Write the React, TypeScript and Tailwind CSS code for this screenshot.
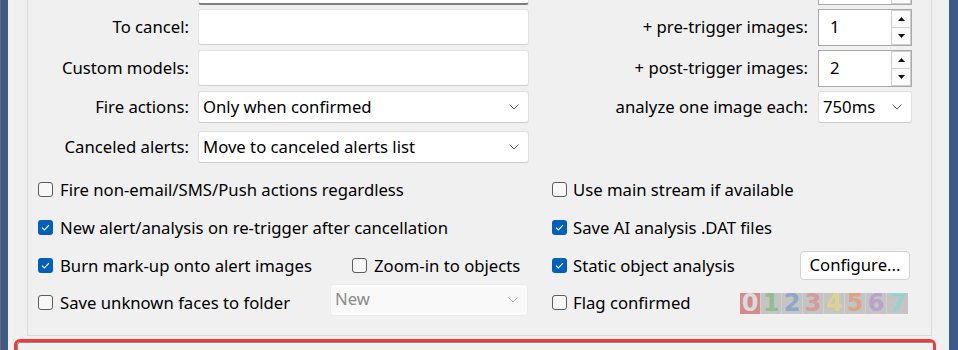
import React from 'react';

const Chevron = ({ color = '#5f5f5f' }: { color?: string }) => (
  <svg width="10" height="6" viewBox="0 0 10 6" className="shrink-0">
    <path d="M0.5 0.5 L5 5 L9.5 0.5" fill="none" stroke={color} strokeWidth="1" />
  </svg>
);

const Box = ({ checked }: { checked?: boolean }) =>
  checked ? (
    <span className="w-[15px] h-[15px] shrink-0 rounded-[3px] bg-[#005fb8] flex items-center justify-center">
      <svg width="9" height="7" viewBox="0 0 9 7">
        <path d="M1 3.6 L3.4 6 L8 1.2" fill="none" stroke="white" strokeWidth="1.1" />
      </svg>
    </span>
  ) : (
    <span className="w-[15px] h-[15px] shrink-0 rounded-[3px] border border-[#5c5c5c] bg-[#f7f7f7]" />
  );

const Check = ({ label, checked, gap = 'gap-[7px]' }: { label: string; checked?: boolean; gap?: string }) => (
  <div className={`flex items-center ${gap}`}>
    <Box checked={checked} />
    <span className="whitespace-nowrap">{label}</span>
  </div>
);

const TextBox = ({ dark }: { dark?: boolean }) => (
  <div
    className={`w-[331px] h-full bg-white rounded-[3px] border border-[#e3e3e3] ${
      dark ? 'border-b-2 border-b-[#7f7f7f]' : 'border-b-[#cfcfcf]'
    }`}
  />
);

const Select = ({ value, w = 'w-[331px]', disabled }: { value: string; w?: string; disabled?: boolean }) => (
  <div
    className={`${w} h-[32px] rounded-[3px] border flex items-center justify-between pl-[4px] pr-[9px] ${
      disabled ? 'bg-[#f9f9f9] border-[#ececec] text-[#8a8a8a]' : 'bg-white border-[#e0e0e0] border-b-[#cdcdcd]'
    }`}
  >
    <span className="whitespace-nowrap">{value}</span>
    <Chevron color={disabled ? '#b5b5b5' : '#5f5f5f'} />
  </div>
);

const Spinner = ({ value }: { value?: string }) => (
  <div className="w-[94px] h-[37px] bg-white border border-[#a9a9a9] flex">
    <div className="flex-1 flex items-center pl-[11px]">{value}</div>
    <div className="w-[20px] flex flex-col">
      <div className="flex-1 border border-[#cfcfcf] bg-[#fbfbfb] flex items-center justify-center">
        <svg width="7" height="4" viewBox="0 0 7 4">
          <path d="M0 4 L3.5 0 L7 4 Z" fill="#111" />
        </svg>
      </div>
      <div className="flex-1 border border-t-0 border-[#cfcfcf] bg-[#fbfbfb] flex items-center justify-center">
        <svg width="7" height="4" viewBox="0 0 7 4">
          <path d="M0 0 L3.5 4 L7 0 Z" fill="#111" />
        </svg>
      </div>
    </div>
  </div>
);

const digits = [
  { d: '0', c: 'text-[#dadada]', bg: 'bg-[#d38b8b]' },
  { d: '1', c: 'text-[#92bd8c]', bg: 'bg-[#c4c4c4]' },
  { d: '2', c: 'text-[#90a7c9]', bg: 'bg-[#c4c4c4]' },
  { d: '3', c: 'text-[#d89b9b]', bg: 'bg-[#c4c4c4]' },
  { d: '4', c: 'text-[#dbd391]', bg: 'bg-[#c4c4c4]' },
  { d: '5', c: 'text-[#daa584]', bg: 'bg-[#c4c4c4]' },
  { d: '6', c: 'text-[#b9a3c9]', bg: 'bg-[#c4c4c4]' },
  { d: '7', c: 'text-[#96d3cc]', bg: 'bg-[#c4c4c4]' },
];

export default function App() {
  return (
    <div className="w-[958px] h-[350px] overflow-hidden bg-[#f0f0f0] flex font-['Noto_Sans',sans-serif] text-[16.7px] text-black leading-none">
      <div className="w-[1px] bg-[#6b6b6b]" />
      <div className="w-[7px] bg-[#3d5a88]" />

      <div className="flex-1 flex flex-col">
        <div className="shrink-0 ml-[19px] mr-[17px] -mt-[32px] border-x border-b border-[#d9d9d9] pb-[17px] flex flex-col">
          {/* row cut off by the top of the window */}
          <div className="h-[37px] flex">
            <div className="w-[501px] flex justify-end">
              <TextBox dark />
            </div>
            <div className="flex-1 flex justify-end pr-[19px]">
              <Spinner />
            </div>
          </div>

          <div className="h-[36px] mt-[4px] flex items-center">
            <div className="w-[501px] h-full flex items-center">
              <span className="w-[161px] text-right">To cancel:</span>
              <div className="ml-[9px] h-full"><TextBox /></div>
            </div>
            <div className="flex-1 flex items-center justify-end pr-[19px]">
              <span className="mr-[10px]">+ pre-trigger images:</span>
              <Spinner value="1" />
            </div>
          </div>

          <div className="h-[36px] mt-[5px] flex items-center">
            <div className="w-[501px] h-full flex items-center">
              <span className="w-[161px] text-right">Custom models:</span>
              <div className="ml-[9px] h-full"><TextBox /></div>
            </div>
            <div className="flex-1 flex items-center justify-end pr-[19px]">
              <span className="mr-[10px]">+ post-trigger images:</span>
              <Spinner value="2" />
            </div>
          </div>

          <div className="h-[32px] mt-[5px] flex items-center">
            <div className="w-[501px] flex items-center">
              <span className="w-[161px] text-right">Fire actions:</span>
              <div className="ml-[9px]"><Select value="Only when confirmed" /></div>
            </div>
            <div className="flex-1 flex items-center justify-end pr-[19px]">
              <span className="mr-[10px]">analyze one image each:</span>
              <Select value="750ms" w="w-[94px]" />
            </div>
          </div>

          <div className="h-[32px] mt-[8px] flex items-center">
            <div className="w-[501px] flex items-center">
              <span className="w-[161px] text-right">Canceled alerts:</span>
              <div className="ml-[9px]"><Select value="Move to canceled alerts list" /></div>
            </div>
          </div>

          <div className="h-[30px] mt-[12px] flex items-center">
            <div className="w-[501px] pl-[10px]">
              <Check label="Fire non-email/SMS/Push actions regardless" />
            </div>
            <div className="flex-1 pl-[23px]">
              <Check label="Use main stream if available" gap="gap-[6px]" />
            </div>
          </div>

          <div className="h-[30px] mt-[8px] flex items-center">
            <div className="w-[501px] pl-[10px]">
              <Check label="New alert/analysis on re-trigger after cancellation" checked />
            </div>
            <div className="flex-1 pl-[23px]">
              <Check label="Save AI analysis .DAT files" checked gap="gap-[6px]" />
            </div>
          </div>

          <div className="h-[30px] mt-[8px] flex items-center">
            <div className="w-[501px] pl-[10px] flex items-center">
              <div className="w-[314px]">
                <Check label="Burn mark-up onto alert images" checked />
              </div>
              <Check label="Zoom-in to objects" />
            </div>
            <div className="flex-1 pl-[23px] pr-[21px] flex items-center justify-between">
              <Check label="Static object analysis" checked gap="gap-[6px]" />
              <div className="w-[110px] h-[29px] -mt-[2px] bg-white border border-[#d3d3d3] rounded-[4px] flex items-center justify-center">
                Configure...
              </div>
            </div>
          </div>

          <div className="h-[30px] mt-[7px] flex items-center">
            <div className="w-[501px] pl-[10px] flex items-center">
              <div className="w-[292px]">
                <Check label="Save unknown faces to folder" />
              </div>
              <div className="-mt-[7px]">
                <Select value="New" w="w-[198px]" disabled />
              </div>
            </div>
            <div className="flex-1 pl-[23px] pr-[23px] flex items-center justify-between">
              <Check label="Flag confirmed" gap="gap-[6px]" />
              <div className="flex h-[21px] bg-[#c4c4c4]">
                {digits.map((g) => (
                  <div
                    key={g.d}
                    className={`w-[21px] h-full ${g.bg} border-r border-[#d0d0d0] last:border-r-0 flex items-center justify-center font-['DejaVu_Sans',sans-serif] font-bold text-[24px] ${g.c}`}
                  >
                    {g.d}
                  </div>
                ))}
              </div>
            </div>
          </div>
        </div>

        <div className="shrink-0 ml-[6px] mr-[13px] mt-[3px] h-[40px] border-[3px] border-[#ef3b3b] rounded-[6px] overflow-hidden">
          <div className="h-full border-t border-l border-[#8a8a8a] rounded-tl-[3px]" />
        </div>
      </div>

      <div className="w-[9px] bg-[#3d5a88]" />
    </div>
  );
}
